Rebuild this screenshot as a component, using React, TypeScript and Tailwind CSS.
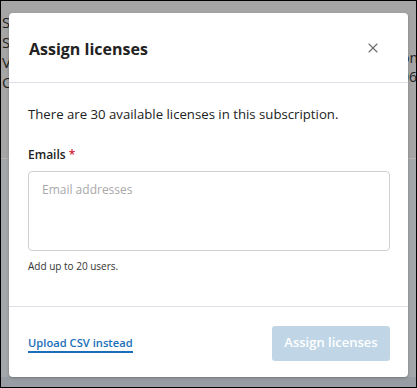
import { X } from 'lucide-react';

export default function App() {
  return (
    <div
      className="relative w-[417px] h-[388px] overflow-hidden border border-black bg-[#a5a5a5]"
      style={{ fontFamily: '"Open Sans", "Liberation Sans", sans-serif' }}
    >
      {/* page behind the overlay */}
      <div className="flex h-full flex-col text-[#1f1f1f]">
        <div className="flex flex-col pl-[1px] pt-[11px] text-[15px] leading-[20px]">
          <span>S</span>
          <span>S</span>
          <span>V</span>
          <span>O</span>
        </div>
        <div className="mt-[66px] h-px bg-[#b4b4b4]" />
        <div className="flex-1 bg-[#a4a7aa]" />
        <div className="h-[10px] bg-[#979da3]" />
      </div>
      <div className="absolute right-[-2px] top-[47px] flex flex-col text-[14px] leading-[19px] text-[#1f1f1f]">
        <span>on</span>
        <span>06</span>
      </div>

      {/* modal */}
      <div className="absolute left-[8px] top-[12px] flex w-[399px] flex-col rounded-[4px] bg-white shadow-[0_1px_3px_rgba(0,0,0,0.25)]">
        <div className="flex h-[70px] items-center justify-between border-b border-[#dedde8] pl-5 pr-[27px]">
          <h2 className="mt-[2px] text-[16px] font-bold text-[#222]">Assign licenses</h2>
          <X className="h-[16px] w-[16px] text-[#6b6b6b]" strokeWidth={1.6} />
        </div>

        <div className="flex flex-col px-[19px] pb-[32px] pt-[21px]">
          <p className="text-[13.2px] leading-5 text-[#222]">
            There are 30 available licenses in this subscription.
          </p>
          <label className="mt-[21px] text-[12px] font-semibold leading-5 text-[#222]">
            Emails <span className="text-[#d2202f]">*</span>
          </label>
          <textarea
            placeholder="Email addresses"
            className="mt-[6px] h-[80px] w-[362px] resize-none rounded-[4px] border border-[#cfcfd6] px-[13px] py-[8px] text-[12px] leading-5 text-[#222] placeholder-[#a9a9a9] outline-none"
          />
          <span className="mt-[7px] text-[10px] leading-4 text-[#333]">Add up to 20 users.</span>
        </div>

        <div className="flex h-[71px] items-center justify-between border-t border-[#dedde8] pl-[19px] pr-[18px]">
          <a className="mt-[3px] border-b-2 border-[#1a6fb8] text-[11.2px] font-semibold leading-[17px] text-[#1a6fb8]">
            Upload CSV instead
          </a>
          <button
            disabled
            className="mt-[2px] h-[35px] w-[118px] rounded-[3px] bg-[#c0d6e6] text-[13px] font-semibold text-white"
          >
            Assign licenses
          </button>
        </div>
      </div>
    </div>
  );
}
